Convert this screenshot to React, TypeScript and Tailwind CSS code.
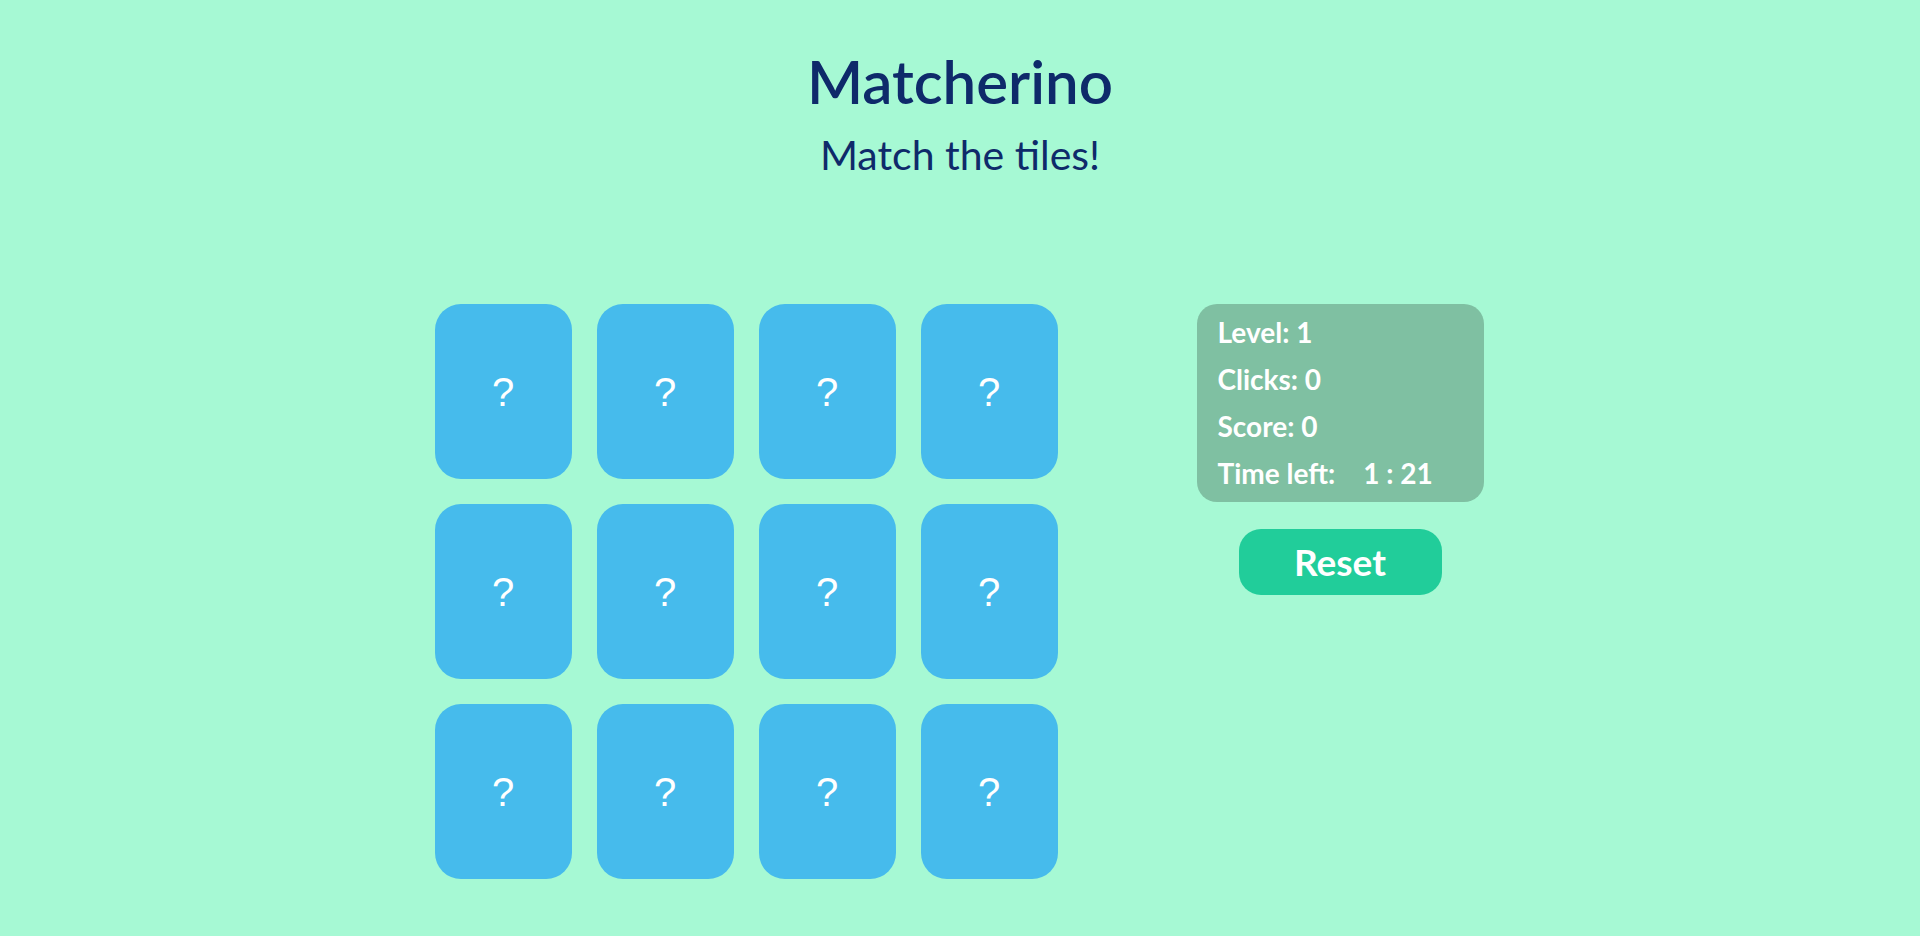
const tiles = Array.from({ length: 12 }, (_, i) => i)

function Tile() {
  return (
    <div className="w-[137px] h-[175px] rounded-[26px] bg-[#46bbec] flex items-center justify-center">
      <span className="text-white text-[40px] leading-none font-['Liberation_Sans',Arial,sans-serif]">?</span>
    </div>
  )
}

export default function App() {
  return (
    <div className="min-h-[936px] bg-[#a6f9d4] flex flex-col items-center font-['Lato',sans-serif] text-[#0e2a6a]">
      <h1 className="mt-[47px] text-[60px] leading-[68px] font-semibold">Matcherino</h1>
      <p className="mt-[18px] text-[41px] leading-[44px]">Match the tiles!</p>

      <div className="flex items-start gap-[139px] mt-[127px] mr-[2px]">
        <div className="grid grid-cols-4 gap-x-[25px] gap-y-[25px]">
          {tiles.map((t) => (
            <Tile key={t} />
          ))}
        </div>

        <div className="flex flex-col items-center gap-[27px]">
          <div className="w-[287px] h-[198px] rounded-[20px] bg-[#7fc0a2] pl-[21px] pt-[4px] text-white text-[28px] font-bold flex flex-col">
            <div className="h-[47px] flex items-center">Level: 1</div>
            <div className="h-[47px] flex items-center">Clicks: 0</div>
            <div className="h-[47px] flex items-center">Score: 0</div>
            <div className="h-[47px] flex items-center">
              Time left:
              <span className="ml-[28px]">1 : 21</span>
            </div>
          </div>
          <button className="w-[203px] h-[66px] rounded-[22px] bg-[#21cd9a] text-white text-[37px] font-bold">
            Reset
          </button>
        </div>
      </div>
    </div>
  )
}
